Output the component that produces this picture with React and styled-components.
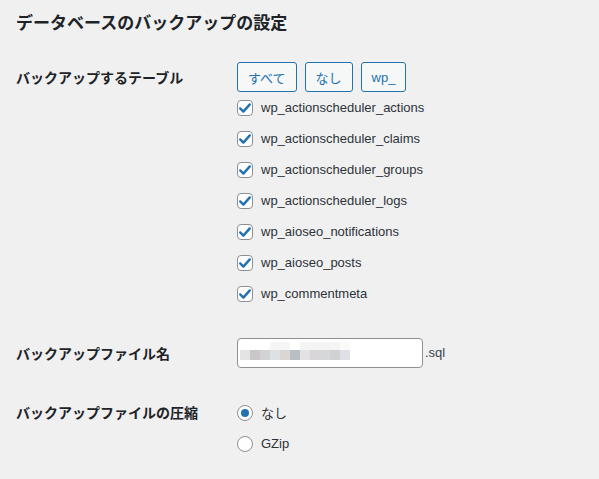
import React from 'react';
import styled, { createGlobalStyle } from 'styled-components';

const GlobalStyle = createGlobalStyle`
  html, body {
    margin: 0;
    background: #f0f0f1;
  }
  body {
    font-family: "Liberation Sans", "Noto Sans CJK JP", sans-serif;
    color: #3c434a;
    font-size: 13px;
  }
`;

const Page = styled.div`
  padding: 10px 16px;
`;

const Title = styled.h2`
  margin: 0;
  font-size: 17px;
  line-height: 24px;
  font-weight: 700;
  color: #1d2327;
  font-family: "Noto Sans CJK JP", sans-serif;
`;

const Form = styled.div`
  margin-top: 28px;
  display: grid;
  grid-template-columns: 221px 1fr;
  row-gap: 29px;
`;

const Label = styled.div`
  font-family: "Noto Sans CJK JP", sans-serif;
  font-size: 14px;
  font-weight: 700;
  line-height: 30px;
  color: #1d2327;
`;

const Field = styled.div`
  display: flex;
  flex-direction: column;
  align-items: flex-start;
`;

const ButtonRow = styled.div`
  display: flex;
  gap: 8px;
`;

const Button = styled.button`
  height: 30px;
  padding: 0 10px;
  border: 1px solid #2271b1;
  border-radius: 3px;
  background: #f6f7f7;
  color: #2271b1;
  font-family: "Liberation Sans", "Noto Sans CJK JP", sans-serif;
  font-size: 13px;
`;

const Option = styled.label`
  display: flex;
  align-items: center;
  gap: 8px;
  height: 31px;
  color: #2c3338;
  font-size: 13px;
`;

const Box = styled.span`
  width: 16px;
  height: 16px;
  box-sizing: border-box;
  border: 1px solid #8c8f94;
  border-radius: 4px;
  background: #fff;
  display: flex;
  align-items: center;
  justify-content: center;
`;

const Radio = styled.span`
  width: 16px;
  height: 16px;
  box-sizing: border-box;
  border: 1px solid #8c8f94;
  border-radius: 50%;
  background: #fff;
  display: flex;
  align-items: center;
  justify-content: center;
  &::after {
    content: '';
    width: 8px;
    height: 8px;
    border-radius: 50%;
    background: ${p => (p.$on ? '#2271b1' : 'transparent')};
  }
`;

const InputRow = styled.div`
  display: flex;
  align-items: center;
  gap: 2px;
`;

const TextBox = styled.div`
  width: 186px;
  height: 30px;
  box-sizing: border-box;
  border: 1px solid #8c8f94;
  border-radius: 4px;
  background: #fff;
  padding: 3px 0 0 2px;
`;

const Mosaic = styled.div`
  display: grid;
  grid-template-columns: repeat(11, 10px);
  grid-template-rows: 8px 10px;
`;

const Cell = styled.span`
  background: ${p => p.$c};
`;

const Suffix = styled.span`
  line-height: 22px;
  color: #3c434a;
`;

const Check = () => (
  <svg width="14" height="14" viewBox="0 0 14 14">
    <path d="M2.2 7.4 L5.4 10.6 L11.8 3.4" fill="none" stroke="#2271b1" strokeWidth="2.4" strokeLinecap="round" strokeLinejoin="round" />
  </svg>
);

const tables = [
  'wp_actionscheduler_actions',
  'wp_actionscheduler_claims',
  'wp_actionscheduler_groups',
  'wp_actionscheduler_logs',
  'wp_aioseo_notifications',
  'wp_aioseo_posts',
  'wp_commentmeta'
];

const topRow = ['#fff', '#fff', '#fff', '#f5f5f5', '#f5f5f5', '#fff', '#f4f4f4', '#f4f4f4', '#f4f4f4', '#f5f5f5', '#fafafa'];
const bottomRow = ['#e4e4e4', '#c9c7ca', '#d2d2d4', '#dde1e3', '#d9d6d3', '#b7bfc2', '#e2e2e4', '#d8d6d9', '#d4d8da', '#d0d1d3', '#dde1e5'];

export default function App() {
  return (
    <Page>
      <GlobalStyle />
      <Title>データベースのバックアップの設定</Title>
      <Form>
        <Label>バックアップするテーブル</Label>
        <Field>
          <ButtonRow>
            <Button>すべて</Button>
            <Button>なし</Button>
            <Button>wp_</Button>
          </ButtonRow>
          {tables.map(t => (
            <Option key={t}>
              <Box><Check /></Box>
              {t}
            </Option>
          ))}
        </Field>

        <Label>バックアップファイル名</Label>
        <Field>
          <InputRow>
            <TextBox>
              <Mosaic>
                {[...topRow, ...bottomRow].map((c, i) => <Cell key={i} $c={c} />)}
              </Mosaic>
            </TextBox>
            <Suffix>.sql</Suffix>
          </InputRow>
        </Field>

        <Label>バックアップファイルの圧縮</Label>
        <Field>
          <Option><Radio $on />なし</Option>
          <Option><Radio />GZip</Option>
        </Field>
      </Form>
    </Page>
  );
}
